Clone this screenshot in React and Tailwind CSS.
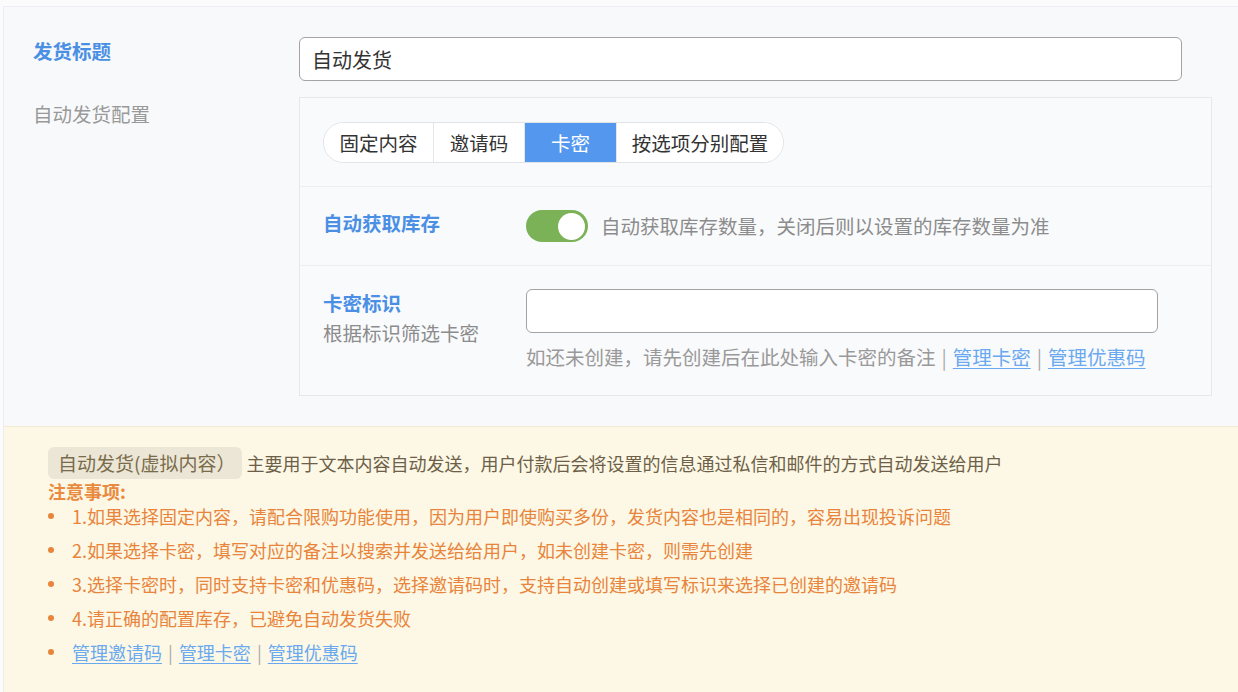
import React, { useState } from "react";

const TABS = [
  { label: "固定内容", w: "w-[109px]" },
  { label: "邀请码", w: "w-[91px]" },
  { label: "卡密", w: "w-[92px]" },
  { label: "按选项分别配置", w: "w-[167px]" },
];

const NOTES = [
  "1.如果选择固定内容，请配合限购功能使用，因为用户即使购买多份，发货内容也是相同的，容易出现投诉问题",
  "2.如果选择卡密，填写对应的备注以搜索并发送给给用户，如未创建卡密，则需先创建",
  "3.选择卡密时，同时支持卡密和优惠码，选择邀请码时，支持自动创建或填写标识来选择已创建的邀请码",
  "4.请正确的配置库存，已避免自动发货失败",
];

const Toggle = ({ on, onChange }) => (
  <button
    type="button"
    onClick={() => onChange(!on)}
    className={`flex h-[32px] w-[62px] shrink-0 items-center rounded-full p-[3px] ${
      on ? "justify-end bg-[#7cb257]" : "justify-start bg-[#dcdfe6]"
    }`}
  >
    <span className="block h-[27px] w-[27px] rounded-full bg-white" />
  </button>
);

const Sep = () => <span className="mx-[6px] text-[#aaaaaa]">|</span>;

const Bullet = () => (
  <span className="mr-[18px] h-[6px] w-[6px] shrink-0 rounded-full bg-[#e8843c]" />
);

export default function App() {
  const [tab, setTab] = useState(2);
  const [autoStock, setAutoStock] = useState(true);
  const [title, setTitle] = useState("自动发货");
  const [mark, setMark] = useState("");

  return (
    <div
      className="min-h-screen bg-[#fbfbfc] pl-[3px] pt-[6px]"
      style={{ fontFamily: '"Noto Sans CJK SC", "Noto Sans", sans-serif' }}
    >
      <div className="border-l border-t border-[#eceef1] bg-[#f8f9fb]">
        {/* form */}
        <div className="flex flex-col gap-[16px] pb-[30px] pl-[29px] pr-[26px] pt-[30px] text-[19.5px]">
          <div className="flex items-start">
            <div className="w-[266px] shrink-0 font-bold leading-[28px] text-[#4a8fe4]">
              发货标题
            </div>
            <input
              value={title}
              onChange={(e) => setTitle(e.target.value)}
              className="mr-[30px] h-[44px] flex-1 rounded-[6px] border border-[#a3a3a6] bg-white px-[12px] text-[20px] text-[#333333] outline-none"
            />
          </div>

          <div className="flex items-start">
            <div className="w-[266px] shrink-0 pt-[3px] leading-[28px] text-[#999999]">
              自动发货配置
            </div>
            <div className="flex-1 border border-[#e6e8eb] bg-[#f9fafc]">
              <div className="border-b border-[#eceef1] px-[23px] pb-[23px] pt-[24px]">
                <div className="inline-flex h-[41px] overflow-hidden rounded-full border border-[#e2e3e6] bg-white">
                  {TABS.map((t, i) => (
                    <button
                      key={t.label}
                      type="button"
                      onClick={() => setTab(i)}
                      className={`flex items-center justify-center ${t.w} ${
                        i > 0 ? "border-l border-[#e6e6e6]" : ""
                      } ${tab === i ? "bg-[#5398ee] text-white" : "bg-white text-[#333333]"}`}
                    >
                      {t.label}
                    </button>
                  ))}
                </div>
              </div>

              <div className="flex h-[79px] items-center border-b border-[#eceef1] px-[23px]">
                <div className="w-[203px] shrink-0 pb-[6px] font-bold text-[#4a8fe4]">
                  自动获取库存
                </div>
                <Toggle on={autoStock} onChange={setAutoStock} />
                <span className="ml-[13px] text-[#8c8c8c]">
                  自动获取库存数量，关闭后则以设置的库存数量为准
                </span>
              </div>

              <div className="flex items-start px-[23px] pb-[24px] pt-[22px]">
                <div className="w-[203px] shrink-0 leading-[30px]">
                  <div className="font-bold text-[#4a8fe4]">卡密标识</div>
                  <div className="text-[#8c8c8c]">根据标识筛选卡密</div>
                </div>
                <div className="mr-[30px] flex flex-1 flex-col">
                  <input
                    value={mark}
                    onChange={(e) => setMark(e.target.value)}
                    className="mt-[1px] h-[44px] rounded-[6px] border border-[#a3a3a6] bg-white px-[12px] outline-none"
                  />
                  <div className="mt-[10px] leading-[28px] text-[#999999]">
                    如还未创建，请先创建后在此处输入卡密的备注
                    <Sep />
                    <a href="#" className="text-[#6aa9ef] underline underline-offset-[3px]">
                      管理卡密
                    </a>
                    <Sep />
                    <a href="#" className="text-[#6aa9ef] underline underline-offset-[3px]">
                      管理优惠码
                    </a>
                  </div>
                </div>
              </div>
            </div>
          </div>
        </div>

        {/* notice */}
        <div className="min-h-[270px] border-t border-[#f3ecd2] bg-[#fcf8e5] pb-[20px] pl-[44px] pr-[20px] pt-[16px] text-[18px]">
          <div className="flex h-[40px] items-center text-[#6e6048]">
            <span className="mr-[4px] rounded-[6px] bg-[#ebe6d5] pl-[10px] pr-[7px] text-[19px] leading-[32px] text-[#7a6b4b]">
              自动发货(虚拟内容）
            </span>
            主要用于文本内容自动发送，用户付款后会将设置的信息通过私信和邮件的方式自动发送给用户
          </div>
          <div className="h-[16px] font-bold leading-[16px] text-[#ea8a3e]">注意事项:</div>
          <ul className="text-[#e8843c]">
            {NOTES.map((n) => (
              <li key={n} className="flex items-center leading-[34px]">
                <Bullet />
                {n}
              </li>
            ))}
            <li className="flex items-center leading-[34px]">
              <Bullet />
              <a href="#" className="text-[#6aa9ef] underline underline-offset-[3px]">
                管理邀请码
              </a>
              <Sep />
              <a href="#" className="text-[#6aa9ef] underline underline-offset-[3px]">
                管理卡密
              </a>
              <Sep />
              <a href="#" className="text-[#6aa9ef] underline underline-offset-[3px]">
                管理优惠码
              </a>
            </li>
          </ul>
        </div>
      </div>
    </div>
  );
}
